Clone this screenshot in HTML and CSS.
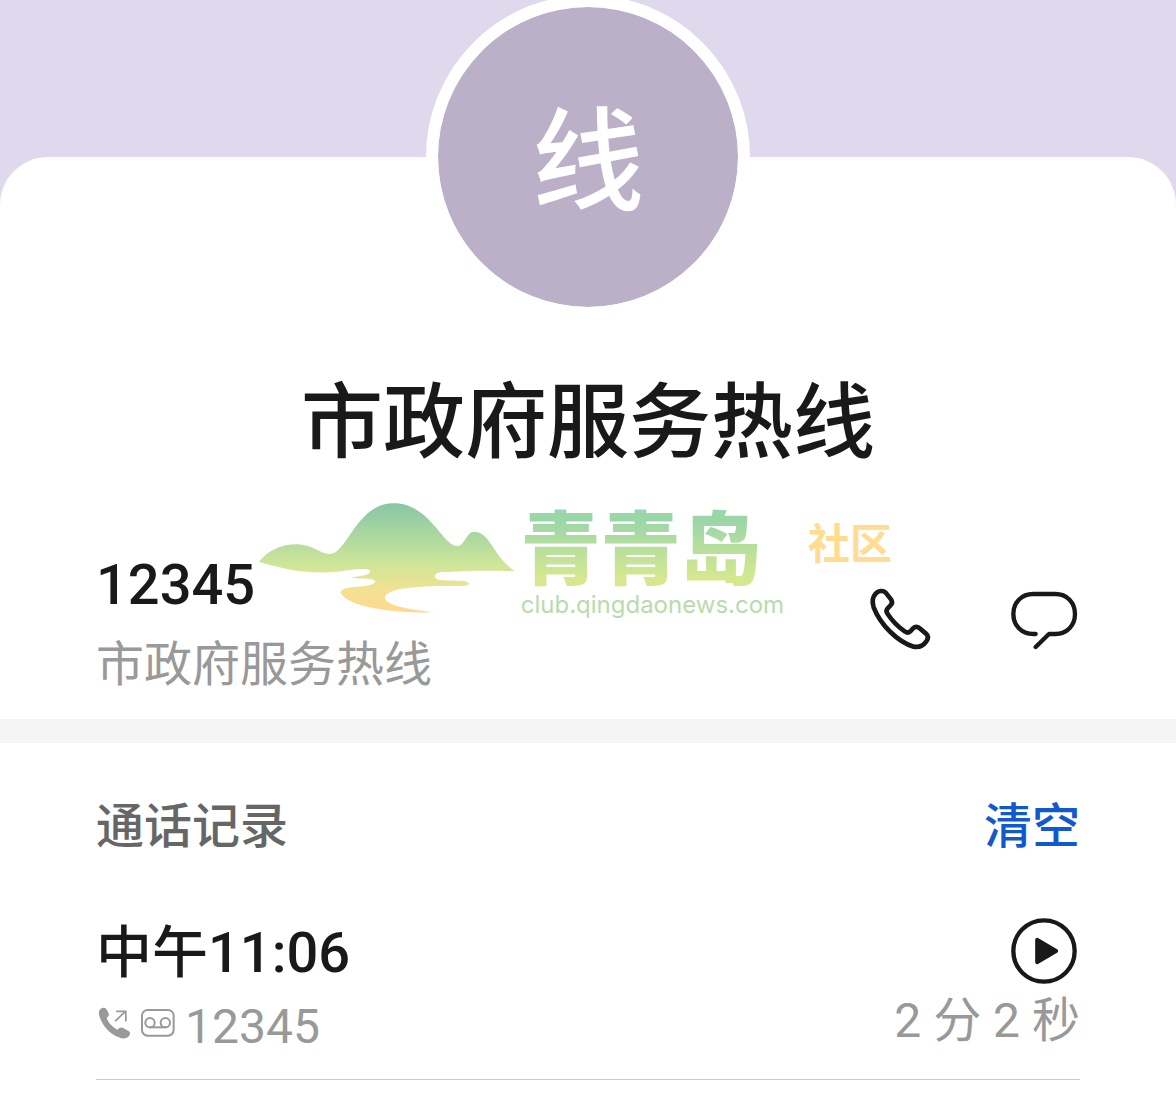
FILE: index.html
```html
<!DOCTYPE html>
<html lang="zh-CN">
<head>
    <meta charset="UTF-8">
    <meta name="viewport" content="width=device-width, initial-scale=1.0">
    <title>市政府服务热线</title>
    <link rel="stylesheet" href="styles.css">
</head>
<body>
    <main class="sheet">
        <header class="profile">
            <div class="avatar">线</div>
            <h1>市政府服务热线</h1>
        </header>

        <section class="contact">
            <div class="contact-info">
                <p class="primary">12345</p>
                <p class="secondary">市政府服务热线</p>
            </div>
            <div class="actions">
                <button type="button" class="icon-button" aria-label="拨打电话">
                    <svg viewBox="42 36 216 216" fill="none" stroke="#191919" stroke-width="14" stroke-linejoin="round" stroke-linecap="round">
                        <path d="M77 71C85 62 99 60 107 68L123 88C128 95 127 101 121 107L113 115C108 120 109 126 113 132C127 153 142 169 164 184C171 189 177 189 182 183L188 176C194 169 202 169 209 175L227 190C235 197 235 206 229 214C219 228 207 233 191 230C143 216 91 164 71 112C66 97 67 82 77 71Z"/>
                    </svg>
                </button>
                <button type="button" class="icon-button" aria-label="发送信息">
                    <svg viewBox="474 36 216 216" fill="none" stroke="#191919" stroke-width="13" stroke-linejoin="round" stroke-linecap="round">
                        <path d="M557 192H550C514 192 490 166 490 132S514 72 550 72H616C651 72 675 98 675 132S651 192 616 192H597L557 231"/>
                    </svg>
                </button>
            </div>
        </section>

        <section class="history">
            <div class="history-head">
                <h2>通话记录</h2>
                <button type="button" class="clear">清空</button>
            </div>
            <div class="call">
                <div class="call-info">
                    <p class="primary">中午11:06</p>
                    <p class="secondary call-number">
                        <svg class="call-icon" viewBox="57 52 93 93" fill="#999">
                            <path d="M62 57C69 52 77 54 80 61L85 70C87 76 85 80 79 83C83 97 98 112 112 118C115 111 121 110 127 113L143 122C149 126 148 133 143 138C136 145 125 145 114 140C87 130 65 104 58 78C55 69 56 62 62 57Z"/>
                            <path d="M104 93L134 65M107 65H135V94" fill="none" stroke="#999" stroke-width="5"/>
                        </svg>
                        <svg class="call-icon voicemail" viewBox="187 58 102 84" fill="none" stroke="#999" stroke-width="6">
                            <rect x="190" y="61" width="95" height="77" rx="17"/>
                            <circle cx="214" cy="99" r="14"/>
                            <circle cx="260" cy="99" r="14"/>
                            <path d="M214 113H260"/>
                        </svg>
                        <span>12345</span>
                    </p>
                </div>
                <div class="call-side">
                    <button type="button" class="icon-button" aria-label="播放录音">
                        <svg viewBox="84 42 216 216">
                            <circle cx="192" cy="150" r="92" fill="none" stroke="#191919" stroke-width="13"/>
                            <path d="M172 117L228 150L172 183Z" fill="#191919" stroke="#191919" stroke-width="13" stroke-linejoin="round"/>
                        </svg>
                    </button>
                    <p class="secondary">2 分 2 秒</p>
                </div>
            </div>
        </section>

        <div class="watermark">
            <svg class="hills" viewBox="24 38 768 330">
                <defs>
                    <linearGradient id="hill" x1="0" y1="0" x2="0" y2="1">
                        <stop offset="0" stop-color="#8ac5a4"/>
                        <stop offset="0.3" stop-color="#abd8a0"/>
                        <stop offset="0.58" stop-color="#d2e698"/>
                        <stop offset="0.8" stop-color="#f3e191"/>
                        <stop offset="1" stop-color="#ffd98e"/>
                    </linearGradient>
                </defs>
                <path fill="url(#hill)" d="M24 214C48 184 86 162 138 162C184 162 206 191 237 191C288 191 316 39 428 39C536 39 575 167 618 167C642 167 646 124 669 124C717 124 726 197 791 243C710 240 636 241 568 246C548 249 546 263 562 268C590 274 652 265 654 280C650 290 604 286 560 287C474 289 402 298 402 323C404 345 474 358 552 366C441 369 296 354 269 308C269 280 368 298 373 273C367 262 332 267 302 262C322 256 357 258 357 243C355 230 299 239 260 244C178 252 105 239 24 214Z"/>
            </svg>
            <div class="brand">
                <strong class="brand-name">青青岛</strong>
                <span class="brand-url">club.qingdaonews.com</span>
            </div>
            <strong class="brand-tag">社区</strong>
        </div>
    </main>
</body>
</html>
```
FILE: styles.css
```css
* {
    box-sizing: border-box;
}
body {
    margin: 0;
    padding-top: 157px;
    background: #e0d9ed;
    color: #191919;
    font-family: Roboto, "Noto Sans CJK SC", sans-serif;
}
h1, h2, p {
    margin: 0;
    font-weight: 500;
}
button {
    padding: 0;
    border: none;
    background: none;
    font-family: inherit;
}
.sheet {
    position: relative;
    min-height: calc(100vh - 157px);
    background: white;
    border-radius: 48px 48px 0 0;
}

.profile {
    display: flex;
    flex-direction: column;
    align-items: center;
}
.avatar {
    display: flex;
    align-items: center;
    justify-content: center;
    width: 324px;
    height: 324px;
    margin-top: -162px;
    padding-bottom: 8px;
    border: 12px solid white;
    border-radius: 50%;
    background: #bbb0c8;
    background-clip: padding-box;
    color: white;
    font-size: 112px;
    font-weight: 500;
}
h1 {
    margin-top: 56px;
    font-size: 82px;
    line-height: 96px;
}

.primary {
    font-size: 56px;
    line-height: 64px;
}
.secondary {
    color: #999;
    font-size: 48px;
    font-weight: 400;
    line-height: 56px;
}
.icon-button {
    width: 72px;
    height: 72px;
}
.icon-button svg {
    display: block;
    width: 100%;
}

.contact {
    display: flex;
    align-items: center;
    justify-content: space-between;
    padding: 82px 96px 26px;
    border-bottom: 24px solid #f5f5f5;
}
.contact .secondary {
    margin-top: 20px;
}
.actions {
    display: flex;
    gap: 72px;
    margin-bottom: 10px;
}

.history {
    padding: 52px 96px 32px;
}
.history-head {
    display: flex;
    justify-content: space-between;
}
h2, .clear {
    font-size: 48px;
    font-weight: 500;
    line-height: 64px;
}
h2 {
    color: #666;
}
.clear {
    color: #1259cd;
}
.call {
    display: flex;
    justify-content: space-between;
    margin-top: 56px;
    padding-bottom: 24px;
    border-bottom: 1px solid #ccc;
}
.call-info {
    padding-top: 6px;
}
.call-number {
    display: flex;
    align-items: center;
    gap: 10px;
    margin-top: 14px;
    padding-left: 3px;
}
.call-icon {
    width: 32px;
    height: 32px;
    margin-bottom: 8px;
}
.voicemail {
    width: 34px;
}
.call-side {
    display: flex;
    flex-direction: column;
    align-items: flex-end;
    gap: 6px;
}

.watermark {
    position: absolute;
    top: 346px;
    left: 22%;
    display: flex;
    pointer-events: none;
}
.hills {
    width: 256px;
    height: 110px;
}
.brand {
    display: flex;
    flex-direction: column;
    margin-left: 6px;
}
.brand-name {
    padding-top: 8px;
    background: linear-gradient(#9bd6a8 20%, #d5e88f 85%);
    background-clip: text;
    -webkit-background-clip: text;
    color: transparent;
    font-size: 80px;
    font-weight: 900;
    line-height: 80px;
}
.brand-url {
    color: #b9dbab;
    font-family: Inter, sans-serif;
    font-size: 24px;
    line-height: 28px;
}
.brand-tag {
    margin: 18px 0 0 24px;
    color: #ffdc90;
    font-size: 42px;
    line-height: 48px;
}
```
